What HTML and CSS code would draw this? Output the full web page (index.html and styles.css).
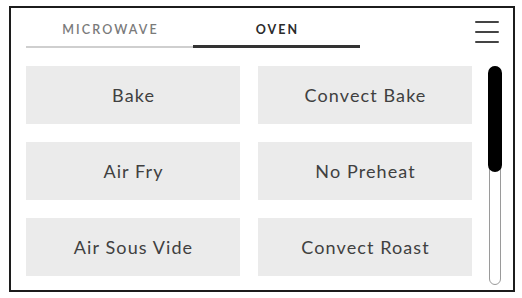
FILE: index.html
```html
<!DOCTYPE html>
<html>
<head>
<meta charset="utf-8">
<link rel="stylesheet" href="styles.css">
</head>
<body>
<div class="screen">
  <div class="header">
    <div class="tabs">
      <div class="tab">MICROWAVE</div>
      <div class="tab active">OVEN</div>
    </div>
    <svg class="menu" width="24" height="24" viewBox="0 0 24 24">
      <rect x="0" y="0" width="24" height="2" rx="1" fill="#444"/>
      <rect x="0" y="10" width="24" height="2" rx="1" fill="#444"/>
      <rect x="0" y="20" width="24" height="2" rx="1" fill="#444"/>
    </svg>
  </div>
  <div class="body">
    <div class="grid">
      <div class="btn">Bake</div>
      <div class="btn">Convect Bake</div>
      <div class="btn">Air Fry</div>
      <div class="btn">No Preheat</div>
      <div class="btn">Air Sous Vide</div>
      <div class="btn">Convect Roast</div>
    </div>
    <div class="scroll">
      <div class="thumb"></div>
    </div>
  </div>
</div>
</body>
</html>
```
FILE: styles.css
```css
html, body {
  margin: 0;
  padding: 0;
  background: #fff;
}
body {
  width: 522px;
  height: 298px;
  overflow: hidden;
  font-family: Lato, "DejaVu Sans", sans-serif;
}
.screen {
  box-sizing: border-box;
  margin: 6px 0 0 9px;
  width: 506px;
  height: 286px;
  border: 2px solid #1c1c1c;
  padding: 0 11px 0 15px;
  display: flex;
  flex-direction: column;
}
.header {
  height: 40px;
  display: flex;
  align-items: flex-start;
}
.tabs {
  display: flex;
  height: 40px;
  align-items: flex-end;
  width: 334px;
}
.tab {
  width: 167px;
  box-sizing: border-box;
  text-align: center;
  font-size: 12.5px;
  font-weight: 600;
  letter-spacing: 2.1px;
  text-indent: 2px;
  line-height: 14px;
  color: #7a7a7a;
  padding-bottom: 9px;
  border-bottom: 2px solid #cfcfcf;
}
.tab.active {
  color: #2b2b2b;
  font-weight: 700;
  border-bottom: 3px solid #333;
  padding-bottom: 8px;
}
.menu {
  margin-left: 115px;
  margin-top: 13px;
}
.body {
  margin-top: 18px;
  display: flex;
  align-items: flex-start;
}
.grid {
  display: grid;
  grid-template-columns: 214px 214px;
  grid-auto-rows: 58px;
  gap: 18px;
}
.btn {
  background: #ebebeb;
  color: #404040;
  font-size: 18px;
  letter-spacing: 1.1px;
  text-indent: 1.1px;
  display: flex;
  align-items: center;
  justify-content: center;
}
.scroll {
  margin-left: 17px;
  box-sizing: border-box;
  width: 12px;
  height: 219px;
  border: 1.5px solid #9a9a9a;
  border-radius: 6px;
  position: relative;
}
.thumb {
  position: absolute;
  left: -2px;
  top: -1.5px;
  width: 14px;
  height: 106px;
  background: #000;
  border-radius: 7px;
}
```
